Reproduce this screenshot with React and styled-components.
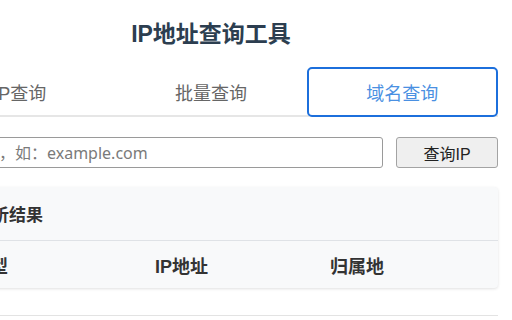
import React, { useState } from "react"
import styled, { createGlobalStyle } from "styled-components"

const GlobalStyle = createGlobalStyle`
  html, body {
    margin: 0;
    padding: 0;
    background: #fff;
    overflow: hidden;
  }
  body {
    font-family: "Liberation Sans", "Noto Sans CJK SC", sans-serif;
  }
`

const Container = styled.div`
  width: 574px;
  margin-left: -76px;
`
const Title = styled.h1`
  margin: 19px 0 0;
  font-size: 23px;
  line-height: 30px;
  font-weight: 700;
  color: #2c3e50;
  text-align: center;
`
const Tabs = styled.div`
  display: flex;
  margin-top: 18px;
  height: 50px;
  border-bottom: 2px solid #e6e6e6;
  box-sizing: border-box;
`
const Tab = styled.button`
  flex: 1;
  height: 50px;
  margin-bottom: -2px;
  box-sizing: border-box;
  font-family: inherit;
  font-size: 18px;
  background: #fff;
  cursor: pointer;
  border: 2px solid ${(p) => (p.$active ? "#1c6fdc" : "transparent")};
  border-radius: 5px;
  color: ${(p) => (p.$active ? "#4a90e2" : "#666")};
  ${(p) => !p.$active && "border-radius: 0; background: transparent;"}
`
const SearchRow = styled.div`
  display: flex;
  gap: 13px;
  margin-top: 20px;
  height: 31px;
`
const Input = styled.input`
  flex: 1;
  height: 31px;
  box-sizing: border-box;
  padding: 0 10px;
  border: 1px solid #9a9a9a;
  border-radius: 3px;
  font-family: "Noto Sans", "Noto Sans CJK SC", sans-serif;
  font-size: 16px;
  color: #333;
  &::placeholder {
    color: #7a7a7a;
  }
`
const Button = styled.button`
  width: 102px;
  height: 31px;
  box-sizing: border-box;
  background: #efefef;
  border: 1px solid #a3a3a3;
  border-radius: 3px;
  font-family: inherit;
  font-size: 16px;
  color: #222;
`
const Card = styled.div`
  margin-top: 19px;
  background: #f8f9fa;
  border-radius: 4px;
  box-shadow: 0 1px 3px rgba(0, 0, 0, 0.12);
`
const CardHeader = styled.div`
  height: 53px;
  display: flex;
  align-items: center;
  padding-left: 51px;
  border-bottom: 1px solid #dfe2e6;
  font-size: 17px;
  font-weight: 700;
  color: #333;
`
const HeadRow = styled.div`
  display: grid;
  grid-template-columns: 183px 175px 1fr;
  align-items: center;
  height: 47px;
  padding-left: 48px;
  font-size: 18px;
  font-weight: 700;
  color: #333;
`
const Divider = styled.div`
  margin-top: 27px;
  border-top: 1px solid #e3e3e3;
`

const tabs = ["IP查询", "批量查询", "域名查询"]

const App = () => {
  const [active, setActive] = useState(2)
  return (
    <Container>
      <GlobalStyle />
      <Title>IP地址查询工具</Title>
      <Tabs>
        {tabs.map((t, i) => (
          <Tab key={t} $active={i === active} onClick={() => setActive(i)}>
            {t}
          </Tab>
        ))}
      </Tabs>
      <SearchRow>
        <Input placeholder="输入域名，如：example.com" />
        <Button>查询IP</Button>
      </SearchRow>
      <Card>
        <CardHeader>解析结果</CardHeader>
        <HeadRow>
          <span>类型</span>
          <span>IP地址</span>
          <span>归属地</span>
        </HeadRow>
      </Card>
      <Divider />
    </Container>
  )
}

export default App
